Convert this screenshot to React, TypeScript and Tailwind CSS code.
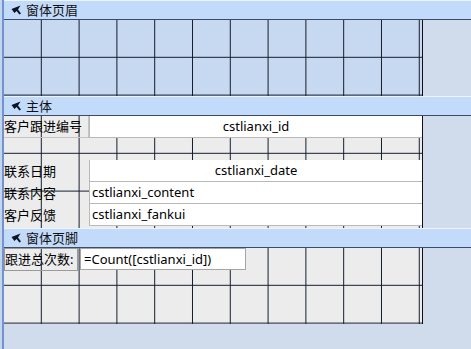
const grid =
  "bg-[linear-gradient(to_right,transparent_36.8px,#141c2c_36.8px),linear-gradient(to_bottom,transparent_36.8px,#141c2c_36.8px)] bg-[size:37.8px_37.8px]";

const SectionBar = ({ title }: { title: string }) => (
  <div className="flex items-center h-[20px] bg-[#c3dbfa] border-t border-t-[#eef4fe] border-b border-b-[#3d4b66] pl-[4px]">
    <svg width="11" height="10" viewBox="0 0 11 10" className="ml-[3px] mr-[4px]">
      <path d="M0.5 4 L9.5 0.5 L7 4.4 L10 8.4 L8.4 9.5 L5.6 6 L3.4 8 Z" fill="#0c1424" />
    </svg>
    <span className="text-[13px] leading-none text-[#111]">{title}</span>
  </div>
);

const Label = ({ text, className = "" }: { text: string; className?: string }) => (
  <div className={`w-[85px] shrink-0 flex items-center text-[13px] leading-none text-black whitespace-nowrap ${className}`}>
    {text}
  </div>
);

const Box = ({ text, center = false }: { text: string; center?: boolean }) => (
  <div
    className={`flex-1 flex items-center bg-white border-l border-b border-[#b9b9b9] text-[13px] leading-none text-black ${
      center ? "justify-center" : "pl-[2px]"
    }`}
  >
    {text}
  </div>
);

export default function App() {
  return (
    <div
      className="w-[471px] h-[349px] flex bg-[#d0dcec] overflow-hidden"
      style={{ fontFamily: '"Noto Sans", "Noto Sans CJK SC", sans-serif' }}
    >
      <div className="w-[2px] bg-[#c4d6ee]" />
      <div className="w-[2px] bg-[#7393d0]" />
      <div className="flex-1 flex flex-col">
        <SectionBar title="窗体页眉" />
        <div className="flex h-[76px]">
          <div className={`w-[419px] border-r border-r-[#111] bg-[#c6d9f0] ${grid}`} />
          <div className="flex-1" />
        </div>

        <SectionBar title="主体" />
        <div className="flex h-[112px]">
          <div className={`w-[419px] border-r border-r-[#111] bg-[#ececec] ${grid} flex flex-col`}>
            <div className="flex h-[22px]">
              <Label text="客户跟进编号" className="border-r border-b border-[#c4c4c4]" />
              <Box text="cstlianxi_id" center />
            </div>
            <div className="h-[22px]" />
            <div className="flex h-[22px]">
              <Label text="联系日期" />
              <Box text="cstlianxi_date" center />
            </div>
            <div className="flex h-[22px]">
              <Label text="联系内容" />
              <Box text="cstlianxi_content" />
            </div>
            <div className="flex h-[22px]">
              <Label text="客户反馈" />
              <Box text="cstlianxi_fankui" />
            </div>
          </div>
          <div className="flex-1" />
        </div>

        <SectionBar title="窗体页脚" />
        <div className="flex h-[76px]">
          <div className={`w-[419px] border-r border-r-[#111] bg-[#ececec] ${grid}`}>
            <div className="flex h-[23px]">
              <div className="w-[74px] flex items-center border border-[#9a9a9a] text-[13px] leading-none text-black whitespace-nowrap">
                跟进总次数:
              </div>
              <div className="ml-[2px] w-[166px] h-[22px] flex items-center pl-[3px] bg-white border border-[#a5a5a5] text-[13px] leading-none text-black">
                =Count([cstlianxi_id])
              </div>
            </div>
          </div>
          <div className="flex-1" />
        </div>
        <div className="flex-1" />
      </div>
    </div>
  );
}
